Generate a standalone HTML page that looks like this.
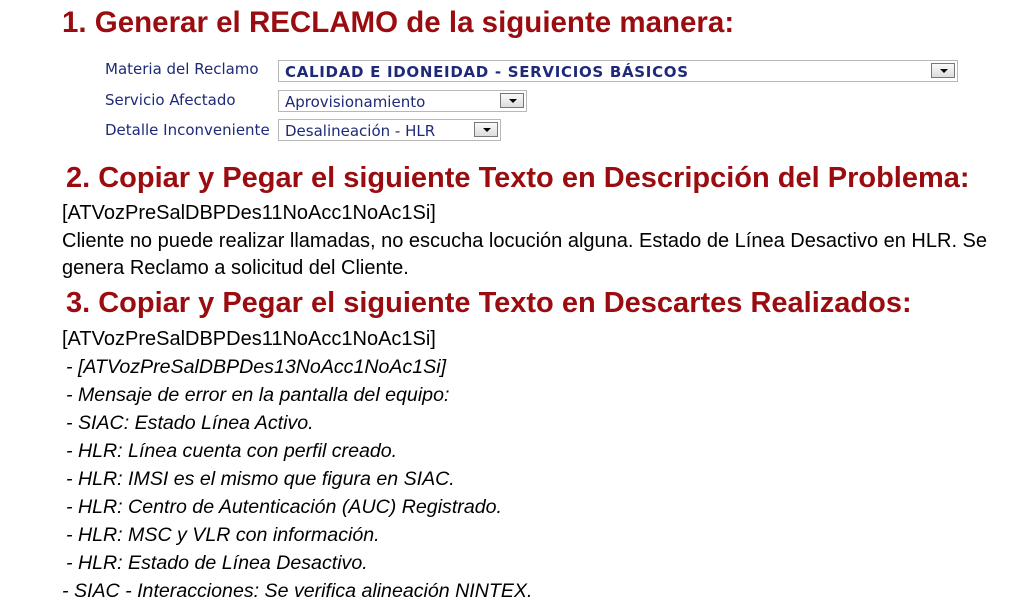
<!DOCTYPE html>
<html><head><meta charset="utf-8"><style>
body{margin:0;width:1017px;height:605px;background:#fff;position:relative;overflow:hidden;font-family:"Liberation Sans",sans-serif}
.a{position:absolute;white-space:nowrap;line-height:22px}
.h{color:#9a0c10;font-weight:bold;font-size:29px;line-height:30px}
.t{font-size:20px;color:#000}
.i{font-style:italic;font-size:19.6px}
.l{font-family:"DejaVu Sans",sans-serif;font-size:15px;color:#1e2a78;line-height:16px}
.s{position:absolute;border:1px solid #b8b8b8;background:#fff;box-sizing:border-box;font-family:"DejaVu Sans",sans-serif;font-size:15px;color:#1e2a78;padding:3px 6px;line-height:16px;white-space:nowrap}
.b{position:absolute;top:2px;right:2px;width:24px;height:15px;border:1px solid #777;background:linear-gradient(#fafafa,#dcdcdc);box-sizing:border-box}
.b:after{content:"";position:absolute;left:8px;top:5px;border-left:4px solid transparent;border-right:4px solid transparent;border-top:4px solid #000}
</style></head><body>
<div class="a h" style="left:62px;top:8px;font-size:29.5px">1. Generar el RECLAMO de la siguiente manera:</div>
<div class="a l" style="left:105px;top:61px">Materia del Reclamo</div>
<div class="a l" style="left:105px;top:92px">Servicio Afectado</div>
<div class="a l" style="left:105px;top:122px">Detalle Inconveniente</div>
<div class="s" style="left:278px;top:60px;width:680px;height:22px;font-weight:bold;letter-spacing:0.7px">CALIDAD E IDONEIDAD - SERVICIOS BÁSICOS<div class="b"></div></div>
<div class="s" style="left:278px;top:90px;width:249px;height:22px">Aprovisionamiento<div class="b"></div></div>
<div class="s" style="left:278px;top:119px;width:223px;height:22px">Desalineación - HLR<div class="b"></div></div>
<div class="a h" style="left:66px;top:163px">2. Copiar y Pegar el siguiente Texto en Descripción del Problema:</div>
<div class="a t" style="left:62px;top:202px">[ATVozPreSalDBPDes11NoAcc1NoAc1Si]</div>
<div class="a t" style="left:62px;top:230px">Cliente no puede realizar llamadas, no escucha locución alguna. Estado de Línea Desactivo en HLR. Se</div>
<div class="a t" style="left:62px;top:257px">genera Reclamo a solicitud del Cliente.</div>
<div class="a h" style="left:66px;top:288px">3. Copiar y Pegar el siguiente Texto en Descartes Realizados:</div>
<div class="a t" style="left:62px;top:328px">[ATVozPreSalDBPDes11NoAcc1NoAc1Si]</div>
<div class="a t i" style="left:66px;top:356px">- [ATVozPreSalDBPDes13NoAcc1NoAc1Si]</div>
<div class="a t i" style="left:66px;top:384px">- Mensaje de error en la pantalla del equipo:</div>
<div class="a t i" style="left:66px;top:412px">- SIAC: Estado Línea Activo.</div>
<div class="a t i" style="left:66px;top:440px">- HLR: Línea cuenta con perfil creado.</div>
<div class="a t i" style="left:66px;top:468px">- HLR: IMSI es el mismo que figura en SIAC.</div>
<div class="a t i" style="left:66px;top:496px">- HLR: Centro de Autenticación (AUC) Registrado.</div>
<div class="a t i" style="left:66px;top:524px">- HLR: MSC y VLR con información.</div>
<div class="a t i" style="left:66px;top:552px">- HLR: Estado de Línea Desactivo.</div>
<div class="a t i" style="left:62px;top:580px">- SIAC - Interacciones: Se verifica alineación NINTEX.</div>
</body></html>
